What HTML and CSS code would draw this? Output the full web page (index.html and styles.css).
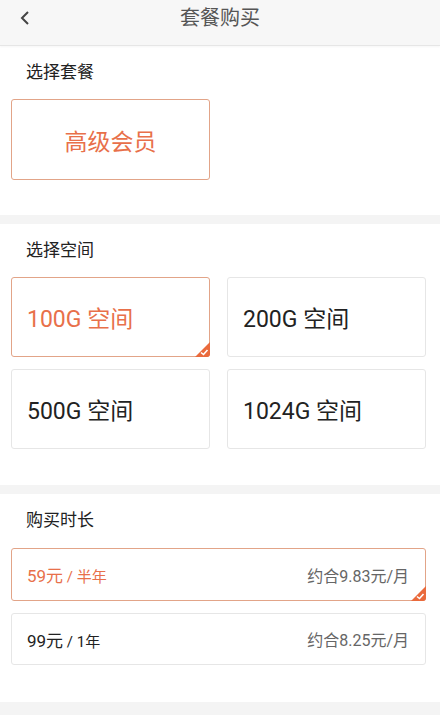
FILE: index.html
```html
<!DOCTYPE html>
<html lang="zh">
<head>
<meta charset="utf-8">
<link rel="stylesheet" href="styles.css">
</head>
<body>
<header class="topbar">
  <svg class="back" width="12" height="16" viewBox="0 0 12 16"><path d="M9 2 L3 8 L9 14" fill="none" stroke="#444" stroke-width="2"/></svg>
  <div class="title">套餐购买</div>
</header>

<section class="panel p1">
  <div class="label">选择套餐</div>
  <div class="plan selected"><span>高级会员</span></div>
</section>

<section class="panel p2">
  <div class="label">选择空间</div>
  <div class="grid">
    <div class="space selected">100G 空间<svg class="tick" width="15" height="15" viewBox="0 0 15 15"><path d="M15 0 L15 12 Q15 15 12 15 L0 15 Z" fill="#ea6a3c"/><path d="M6 10.5 L8.5 12.5 L12.5 8" fill="none" stroke="#fff" stroke-width="1.6"/></svg></div>
    <div class="space">200G 空间</div>
    <div class="space">500G 空间</div>
    <div class="space">1024G 空间</div>
  </div>
</section>

<section class="panel p3">
  <div class="label">购买时长</div>
  <div class="rows">
    <div class="row selected">
      <div class="price"><span class="amt">59元</span><span class="per"> / 半年</span></div>
      <div class="month">约合9.83元/月</div>
      <svg class="tick" width="15" height="15" viewBox="0 0 15 15"><path d="M15 0 L15 12 Q15 15 12 15 L0 15 Z" fill="#ea6a3c"/><path d="M6 10.5 L8.5 12.5 L12.5 8" fill="none" stroke="#fff" stroke-width="1.6"/></svg>
    </div>
    <div class="row">
      <div class="price"><span class="amt">99元</span><span class="per"> / 1年</span></div>
      <div class="month">约合8.25元/月</div>
    </div>
  </div>
</section>
</body>
</html>
```
FILE: styles.css
```css
* { box-sizing: border-box; }
html, body { margin: 0; padding: 0; }
body {
  background: #f4f4f4;
  font-family: "Roboto", "Noto Sans CJK SC", sans-serif;
  color: #222;
  width: 440px;
  height: 715px;
  overflow: hidden;
}
.topbar {
  height: 46px;
  background: #f7f7f7;
  border-bottom: 1px solid #e6e6e6;
  box-shadow: 0 1px 2px rgba(0,0,0,0.04);
  position: relative;
  display: flex;
  align-items: center;
  justify-content: center;
  padding-bottom: 9px;
}
.back { position: absolute; left: 19px; top: 10px; }
.title { font-size: 20px; color: #555; line-height: 24px; }

.panel { background: #fff; margin-bottom: 9px; }
.label { font-size: 17px; line-height: 24px; color: #222; padding-left: 26px; }
.p1 { padding: 14px 0 35px; }
.p1 .label { margin-bottom: 15px; }
.plan {
  margin-left: 11px;
  width: 199px;
  height: 81px;
  border: 1px solid #e2a488;
  border-radius: 3px;
  display: flex;
  align-items: center;
  justify-content: center;
  color: #e8704a;
  font-size: 23px;
}
.p2 { padding: 14px 14px 36px 11px; }
.p2 .label { padding-left: 15px; margin-bottom: 15px; }
.grid {
  display: grid;
  grid-template-columns: 199px 199px;
  column-gap: 17px;
  row-gap: 12px;
}
.space {
  position: relative;
  height: 80px;
  border: 1px solid #e6e6e6;
  border-radius: 3px;
  display: flex;
  align-items: center;
  padding-left: 15px;
  font-size: 23px;
  color: #222;
}
.space.selected { border-color: #e2a488; color: #e8704a; }
.tick { position: absolute; right: -1px; bottom: -1px; }

.p3 { padding: 14px 14px 37px 11px; margin-bottom: 0; }
.p3 .label { padding-left: 15px; margin-bottom: 16px; }
.rows { display: flex; flex-direction: column; gap: 12px; }
.row {
  position: relative;
  height: 53px;
  border: 1px solid #e6e6e6;
  border-radius: 3px;
  display: flex;
  align-items: center;
  justify-content: space-between;
  padding: 0 16px 0 15px;
}
.row + .row { height: 52px; }
.row.selected { border-color: #e2a488; }
.price { color: #222; }
.row.selected .price { color: #e8704a; }
.amt { font-size: 17px; }
.per { font-size: 15px; }
.month { font-size: 16px; color: #666; }
```
